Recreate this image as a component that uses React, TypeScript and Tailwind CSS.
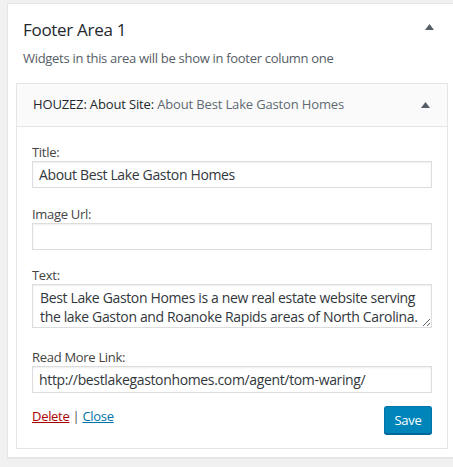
import React from "react";

const Tri = () => (
  <svg width="9" height="6" viewBox="0 0 9 6" className="block">
    <polygon points="4.5,0 9,6 0,6" fill="#555d66" />
  </svg>
);

export default function App() {
  const font = { fontFamily: '"Open Sans", "Noto Sans", sans-serif' };
  const inFont = { fontFamily: '"Open Sans", "Noto Sans", sans-serif', letterSpacing: "-0.35px" };
  return (
    <div className="w-[453px] h-[467px] overflow-hidden bg-[#f1f1f1] tracking-[-0.3px]" style={font}>
      <div className="ml-[7px] mt-[3px] w-[450px] h-[455px] bg-white border border-[#e5e5e5] shadow-[0_1px_1px_rgba(0,0,0,0.04)]">
        <div className="flex items-start justify-between pl-[15px] pr-[22px] pt-[14px]">
          <h2 className="text-[17px] leading-[24px] text-[#23282d] font-normal">Footer Area 1</h2>
          <div className="mt-[6px]"><Tri /></div>
        </div>
        <p className="pl-[15px] mt-[7px] text-[13px] leading-[18px] text-[#555d66]">
          Widgets in this area will be show in footer column one
        </p>
        <div className="ml-[8px] mt-[16px] w-[432px] border border-[#e5e5e5] bg-white">
          <div className="h-[43px] flex items-center justify-between bg-[#fafafa] border-b border-[#e5e5e5] pl-[16px] pr-[17px]">
            <div className="text-[13px] font-medium text-[#23282d] tracking-[-0.15px]">
              HOUZEZ: About Site: <span className="font-normal text-[#606a73]">About Best Lake Gaston Homes</span>
            </div>
            <Tri />
          </div>
          <div className="px-[15px] pt-[16px] pb-[14px]">
            <label className="block text-[13px] leading-[18px] text-[#444]">Title:</label>
            <input
              readOnly
              value="About Best Lake Gaston Homes"
              className="block w-full h-[27px] border border-[#ddd] px-[6px] text-[14px] text-[#32373c] outline-none shadow-[inset_0_1px_2px_rgba(0,0,0,0.07)]"
              style={inFont}
            />
            <label className="block mt-[17px] text-[13px] leading-[18px] text-[#444]">Image Url:</label>
            <input
              readOnly
              value=""
              className="block w-full h-[27px] border border-[#ddd] px-[6px] text-[14px] text-[#32373c] outline-none shadow-[inset_0_1px_2px_rgba(0,0,0,0.07)]"
              style={inFont}
            />
            <label className="block mt-[16px] text-[13px] leading-[18px] text-[#444]">Text:</label>
            <textarea
              readOnly
              value="Best Lake Gaston Homes is a new real estate website serving the lake Gaston and Roanoke Rapids areas of North Carolina."
              className="block w-full h-[44px] border border-[#ddd] pl-[7px] pr-[4px] pt-[3px] text-[14px] leading-[19px] text-[#32373c] outline-none resize-y overflow-hidden shadow-[inset_0_1px_2px_rgba(0,0,0,0.07)]"
              style={inFont}
            />
            <label className="block mt-[20px] text-[13px] leading-[18px] text-[#444]">Read More Link:</label>
            <input
              readOnly
              value="http://bestlakegastonhomes.com/agent/tom-waring/"
              className="block w-full h-[27px] border border-[#ddd] px-[6px] text-[14px] text-[#32373c] outline-none shadow-[inset_0_1px_2px_rgba(0,0,0,0.07)]"
              style={inFont}
            />
            <div className="flex items-start justify-between mt-[13px]">
              <div className="text-[13px] leading-[18px] text-[#555] pt-[1px]">
                <a className="underline text-[#a00]" href="#">Delete</a>
                <span> | </span>
                <a className="underline text-[#0073aa]" href="#">Close</a>
              </div>
              <button className="w-[48px] h-[28px] rounded-[3px] bg-[#0085ba] border border-[#0073aa] border-b-[#006799] shadow-[0_1px_0_#006799] text-white text-[13px] leading-[26px]">
                Save
              </button>
            </div>
          </div>
        </div>
      </div>
    </div>
  );
}
